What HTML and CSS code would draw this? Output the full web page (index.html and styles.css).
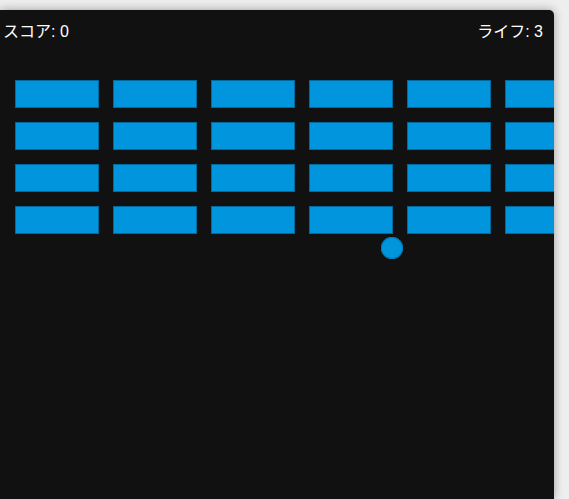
FILE: index.html
```html
<!DOCTYPE html>
<html lang="ja">
<head>
<meta charset="utf-8">
<title>ブロック崩し</title>
<link rel="stylesheet" href="styles.css">
</head>
<body>
<div class="board">
  <div class="hud">
    <span class="score">スコア: 0</span>
    <span class="lives">ライフ: 3</span>
  </div>
  <div class="bricks">
    <div class="brick"></div><div class="brick"></div><div class="brick"></div><div class="brick"></div><div class="brick"></div><div class="brick"></div>
    <div class="brick"></div><div class="brick"></div><div class="brick"></div><div class="brick"></div><div class="brick"></div><div class="brick"></div>
    <div class="brick"></div><div class="brick"></div><div class="brick"></div><div class="brick"></div><div class="brick"></div><div class="brick"></div>
    <div class="brick"></div><div class="brick"></div><div class="brick"></div><div class="brick"></div><div class="brick"></div><div class="brick"></div>
  </div>
  <div class="ball"></div>
</div>
</body>
</html>
```

FILE: styles.css
```css
html, body {
  margin: 0;
  padding: 0;
  background: #eeeeee;
  overflow: hidden;
}
.board {
  position: relative;
  margin-top: 10px;
  width: 554px;
  height: 489px;
  background: #111111;
  border-top-right-radius: 5px;
  box-shadow: 0 0 10px rgba(0, 0, 0, 0.35);
  overflow: hidden;
  font-family: "Liberation Sans", "Noto Sans CJK JP", sans-serif;
  color: #ffffff;
}
.hud {
  display: flex;
  justify-content: space-between;
  padding: 12px 11px 0 3px;
  font-size: 16px;
  line-height: 19px;
}
.bricks {
  display: grid;
  grid-template-columns: repeat(6, 84px);
  grid-auto-rows: 28px;
  gap: 14px;
  margin: 39px 0 0 15px;
  width: 600px;
}
.brick {
  background: #0095dd;
  border: 1px solid #006a9e;
  box-sizing: border-box;
}
.ball {
  position: absolute;
  left: 380.5px;
  top: 226.5px;
  width: 22px;
  height: 22px;
  border-radius: 50%;
  background: #0095dd;
  box-shadow: inset 0 0 0 1px #007bb8;
}
```
